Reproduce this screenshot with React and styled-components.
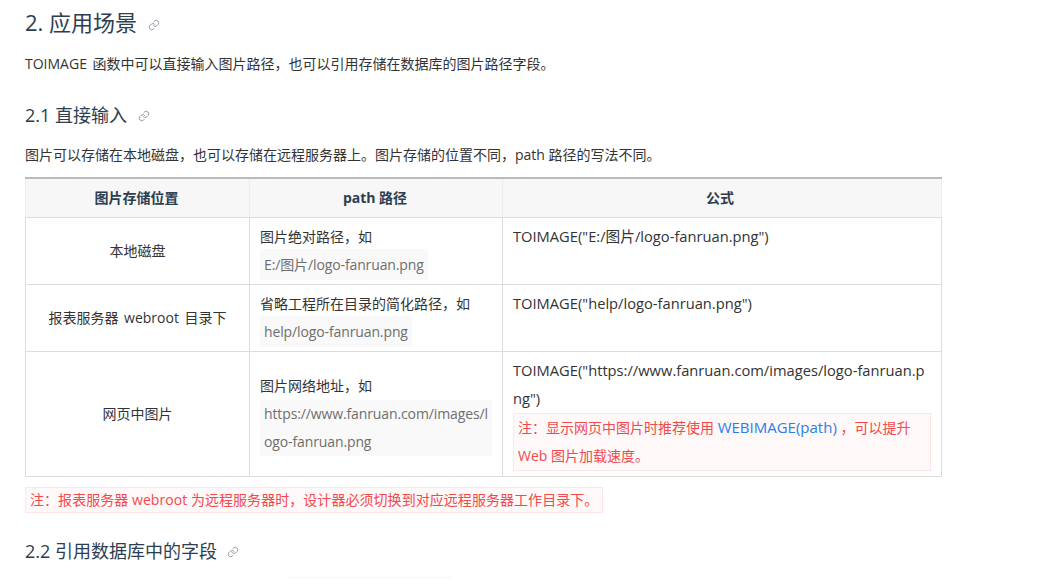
import React from "react";
import styled, { createGlobalStyle } from "styled-components";

const Global = createGlobalStyle`
  html, body { margin: 0; padding: 0; background: #fff; overflow: hidden; }
  body {
    font-family: "Open Sans", "Noto Sans CJK SC", sans-serif;
    font-size: 14px;
    line-height: 28px;
    color: #333;
  }
`;

const Page = styled.main`
  height: 580px;
  padding-left: 25px;
  overflow: hidden;
`;

const H2 = styled.h2`
  margin: 0;
  padding-top: 6px;
  font-size: 22px;
  font-weight: 400;
  line-height: 32px;
  color: #2c3e50;
`;

const H3 = styled.h3`
  margin: ${(p) => p.$top}px 0 0;
  font-size: 18px;
  font-weight: 400;
  line-height: 28px;
  color: #2c3e50;
`;

const Para = styled.p`
  margin: ${(p) => p.$top}px 0 0;
  word-spacing: ${(p) => p.$spacing || 0}px;
  color: #333;
`;

const Anchor = styled.svg`
  width: 12px;
  height: 12px;
  margin-left: ${(p) => p.$gap}px;
  vertical-align: 0;
  fill: none;
  stroke: #8a94a0;
  stroke-width: 1.8;
  stroke-linecap: round;
  stroke-linejoin: round;
`;

const Table = styled.table`
  margin-top: 8px;
  width: 916px;
  border-collapse: collapse;
  table-layout: fixed;
  border-top: 2px solid #bbb;
`;

const Th = styled.th`
  height: 38px;
  padding: 0 ${(p) => p.$right}px 0 10px;
  background: #f7f7f7;
  border: 1px solid #ededed;
  border-top: none;
  border-bottom: 1px solid #ddd;
  font-weight: 700;
  color: #2c3e50;
  text-align: center;
`;

const Td = styled.td`
  padding: 5px 10px;
  border: 1px solid #ddd;
  vertical-align: middle;
  word-break: break-all;
`;

const LabelCell = styled(Td)`
  text-align: center;
  word-spacing: 2px;
`;

const FormulaCell = styled(Td)`
  padding-top: 4px;
  vertical-align: top;
  font-size: 14.7px;
`;

const Code = styled.code`
  padding: 6px 4px;
  background: #f9f9f9;
  font-family: inherit;
  font-size: 14px;
  letter-spacing: -0.12px;
  color: #6e6e6e;
`;

const CodeBlock = styled.span`
  display: block;
  background: #f9f9f9;
  padding: 0 4px;
  letter-spacing: -0.12px;
  color: #6e6e6e;
  word-break: normal;
  overflow-wrap: anywhere;
`;

const Note = styled.div`
  margin-top: 1px;
  padding: 0 4px;
  background: #fff8f8;
  border: 1px solid #ffe6e6;
  color: #f04a4d;
  font-size: 14px;
  line-height: 28px;
  word-break: normal;
`;

const InlineNote = styled(Note)`
  display: inline-block;
  margin-top: 10px;
  vertical-align: top;
  line-height: 24px;
  letter-spacing: 0.05px;
`;

const Link = styled.span`
  color: #2a7ee8;
  font-size: 15px;
  line-height: 1;
`;

const Clip = styled.div`
  margin: 12px 0 0 263px;
  width: 164px;
  height: 1px;
  background: #f5f5f5;
`;

function LinkIcon({ gap }) {
  return (
    <Anchor $gap={gap} viewBox="0 0 24 24" aria-hidden="true">
      <path d="M10 13a5 5 0 0 0 7.5.5l3-3a5 5 0 0 0-7-7l-1.7 1.7" />
      <path d="M14 11a5 5 0 0 0-7.5-.5l-3 3a5 5 0 0 0 7 7l1.7-1.7" />
    </Anchor>
  );
}

export default function App() {
  return (
    <Page>
      <Global />
      <H2>
        2. 应用场景
        <LinkIcon gap={11} />
      </H2>
      <Para $top={12} $spacing={2}>TOIMAGE 函数中可以直接输入图片路径，也可以引用存储在数据库的图片路径字段。</Para>
      <H3 $top={23}>
        2.1 直接输入
        <LinkIcon gap={11} />
      </H3>
      <Para $top={12}>图片可以存储在本地磁盘，也可以存储在远程服务器上。图片存储的位置不同，path 路径的写法不同。</Para>
      <Table>
        <colgroup>
          <col style={{ width: 224 }} />
          <col style={{ width: 253 }} />
          <col style={{ width: 439 }} />
        </colgroup>
        <thead>
          <tr>
            <Th $right={12}>图片存储位置</Th>
            <Th $right={12}>path 路径</Th>
            <Th $right={14}>公式</Th>
          </tr>
        </thead>
        <tbody>
          <tr>
            <LabelCell>本地磁盘</LabelCell>
            <Td>
              图片绝对路径，如
              <br />
              <Code>E:/图片/logo-fanruan.png</Code>
            </Td>
            <FormulaCell>TOIMAGE("E:/图片/logo-fanruan.png")</FormulaCell>
          </tr>
          <tr>
            <LabelCell>报表服务器 webroot 目录下</LabelCell>
            <Td>
              省略工程所在目录的简化路径，如
              <br />
              <Code>help/logo-fanruan.png</Code>
            </Td>
            <FormulaCell>TOIMAGE("help/logo-fanruan.png")</FormulaCell>
          </tr>
          <tr>
            <LabelCell>网页中图片</LabelCell>
            <Td>
              图片网络地址，如
              <CodeBlock>https://www.fanruan.com/images/l<wbr />ogo-fanruan.png</CodeBlock>
            </Td>
            <FormulaCell>
              TOIMAGE("https://www.fanruan.com/images/logo-fanruan.png")
              <Note>
                注：显示网页中图片时推荐使用 <Link>WEBIMAGE(path)</Link> ，可以提升 Web 图片加载速度。
              </Note>
            </FormulaCell>
          </tr>
        </tbody>
      </Table>
      <InlineNote>注：报表服务器 webroot 为远程服务器时，设计器必须切换到对应远程服务器工作目录下。</InlineNote>
      <H3 $top={24}>
        2.2 引用数据库中的字段
        <LinkIcon gap={10} />
      </H3>
      <Clip />
    </Page>
  );
}
